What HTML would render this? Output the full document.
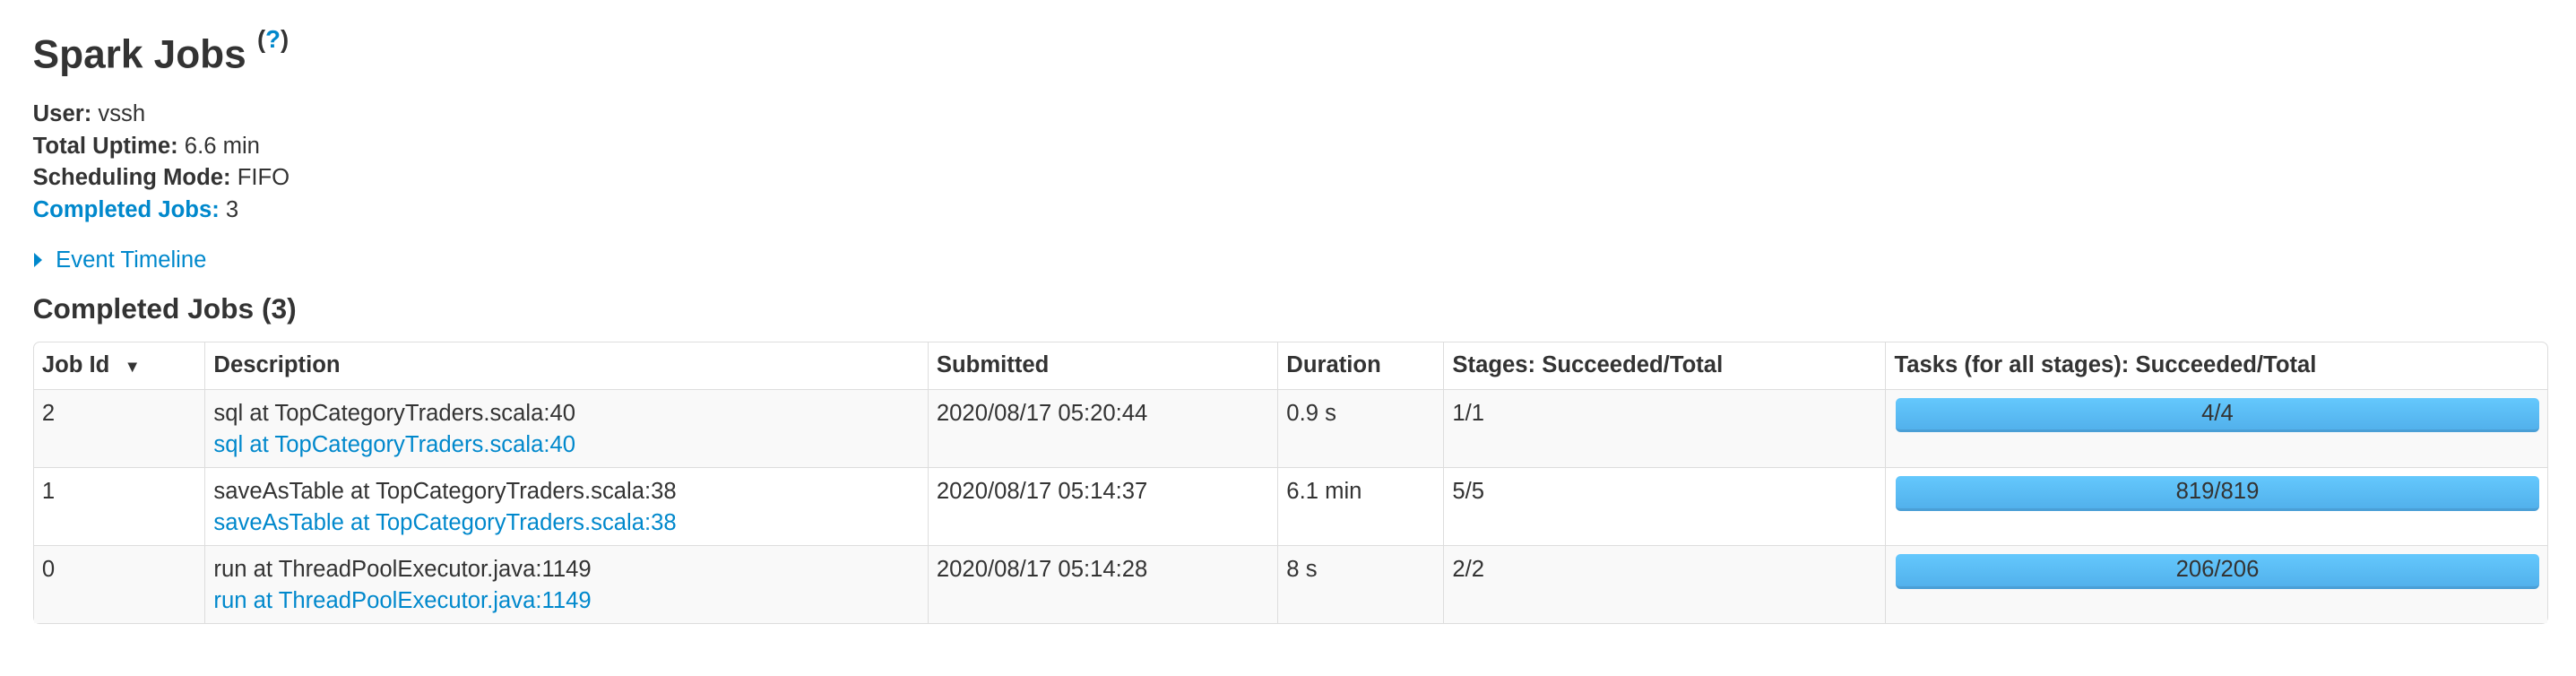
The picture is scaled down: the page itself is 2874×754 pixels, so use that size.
<!DOCTYPE html>
<html><head><style>
html,body{margin:0;padding:0;background:#fff;}
body{width:1568px;height:411.4px;zoom:1.83291;font-family:"Liberation Sans",Helvetica,Arial,sans-serif;color:#333;font-size:14px;position:relative;overflow:hidden;}
a{color:#0088cc;text-decoration:none;}
.abs{position:absolute;}
h3{position:absolute;left:20px;top:12px;margin:0;font-size:24.1px;font-weight:bold;line-height:32px;}
h3 sup{font-size:15px;position:relative;top:-4px;}
.info{position:absolute;left:20px;top:60px;line-height:19.5px;}
h4{position:absolute;left:20px;top:177px;margin:0;font-size:17.3px;font-weight:bold;line-height:22px;}
table{position:absolute;left:20px;top:208px;width:1531px;table-layout:fixed;border-collapse:separate;border-spacing:0;border:1px solid #ddd;border-radius:4px;}
td,th{border-left:1px solid #ddd;border-top:1px solid #ddd;padding:5px 5px 4px;text-align:left;vertical-align:top;line-height:19px;font-size:14px;white-space:nowrap;}
th{border-top:none;padding:4px 5px 4px;font-weight:bold;}
tr td:first-child,tr th:first-child{border-left:none;}
tbody tr:nth-child(odd) td{background:#f9f9f9;}
td:last-child{padding-left:6px;}
.bar{border-radius:3px;background:linear-gradient(#64c8fd,#52b1ec);border-bottom:2px solid #4a9fd6;text-align:center;line-height:19px;color:#333;box-sizing:border-box;height:21px;}
</style></head><body>
<h3>Spark Jobs <sup>(<a>?</a>)</sup></h3>
<div class="info">
<div><b>User:</b> vssh</div>
<div><b>Total Uptime:</b> 6.6 min</div>
<div><b>Scheduling Mode:</b> FIFO</div>
<div><a><b>Completed Jobs:</b></a> 3</div>
</div>
<div class="abs" style="left:21px;top:149px;line-height:19px;"><span style="display:inline-block;width:0;height:0;border-top:4.5px solid transparent;border-bottom:4.5px solid transparent;border-left:5px solid #0088cc;margin-right:8px;"></span><a>Event Timeline</a></div>
<h4>Completed Jobs (3)</h4>
<table>
<colgroup><col style="width:104px"><col style="width:440px"><col style="width:213px"><col style="width:101px"><col style="width:269px"><col></colgroup>
<thead><tr>
<th>Job Id <span style="font-size:10px;margin-left:5px">&#9660;</span></th>
<th>Description</th>
<th>Submitted</th>
<th>Duration</th>
<th>Stages: Succeeded/Total</th>
<th>Tasks (for all stages): Succeeded/Total</th>
</tr></thead>
<tbody>
<tr><td>2</td><td>sql at TopCategoryTraders.scala:40<br><a>sql at TopCategoryTraders.scala:40</a></td><td>2020/08/17 05:20:44</td><td>0.9 s</td><td>1/1</td><td><div class="bar">4/4</div></td></tr>
<tr><td>1</td><td>saveAsTable at TopCategoryTraders.scala:38<br><a>saveAsTable at TopCategoryTraders.scala:38</a></td><td>2020/08/17 05:14:37</td><td>6.1 min</td><td>5/5</td><td><div class="bar">819/819</div></td></tr>
<tr><td>0</td><td>run at ThreadPoolExecutor.java:1149<br><a>run at ThreadPoolExecutor.java:1149</a></td><td>2020/08/17 05:14:28</td><td>8 s</td><td>2/2</td><td><div class="bar">206/206</div></td></tr>
</tbody>
</table>
</body></html>
